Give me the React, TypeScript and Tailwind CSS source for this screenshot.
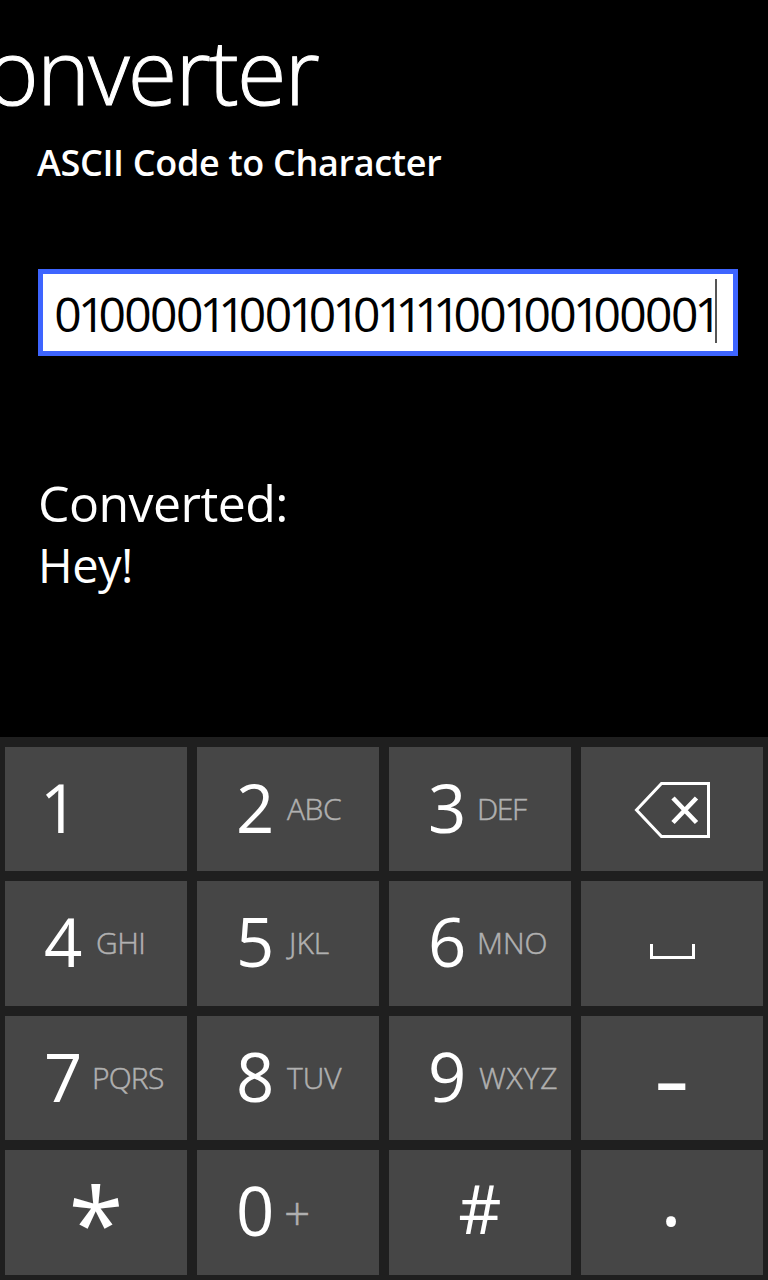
import React from "react";

type KeyDef = { digit: string; label?: string; digitClass?: string; labelClass?: string };

function DigitKey({
  digit,
  label,
  digitClass = "",
  labelClass = "ml-[4px] text-[30px]",
}: KeyDef) {
  return (
    <button className="flex h-full w-full items-start bg-[#464646] pl-[39px] text-left">
      <span className={`mt-[10px] w-[47px] shrink-0 text-[67px] leading-[100px] text-white ${digitClass}`}>{digit}</span>
      {label && (
        <span
          className={`pt-[11px] whitespace-nowrap font-light leading-[102px] text-[#b0b0b0] [-webkit-text-stroke:0.5px_#b0b0b0] ${labelClass}`}
        >
          {label}
        </span>
      )}
    </button>
  );
}

function IconKey({ label, children }: { label: string; children: React.ReactNode }) {
  return (
    <button aria-label={label} className="h-full w-full bg-[#464646]">
      <svg viewBox="0 0 182 124" className="h-[124px] w-[182px]" fill="none" stroke="white">
        {children}
      </svg>
    </button>
  );
}

const code = "01000011001010111100100100001";

// Tightens each pair of digits so that ones take less room than zeros.
const pairTracking: Record<string, string> = {
  "00": "tracking-[-1.65px]",
  "01": "tracking-[-3.8px]",
  "10": "tracking-[-6.9px]",
  "11": "tracking-[-8.7px]",
  "1": "tracking-[-7px]",
};

export default function App() {
  return (
    <div className="flex h-[1280px] w-[768px] flex-col overflow-hidden bg-black font-['Open_Sans','Noto_Sans',sans-serif] text-white">
      <main className="flex h-[737px] flex-col">
        <h1 className="mt-[20px] -ml-[14px] h-[100px] whitespace-nowrap text-[90px] font-light leading-[100px] tracking-[-1.8px] [-webkit-text-stroke:1px_white]">
          onverter
        </h1>
        <h2 className="mt-[18px] ml-[37px] h-[50px] whitespace-nowrap text-[36px] font-semibold leading-[50px] tracking-[-0.33px]">
          ASCII Code to Character
        </h2>
        <div className="mt-[81px] ml-[38px] flex h-[87px] w-[700px] items-start justify-end border-[5px] border-[#3e65ff] bg-white pr-[16px] pt-[5px] text-black">
          <div className="h-[64px] whitespace-nowrap text-[48px] leading-[70px]">
            {code.split("").map((d, i) => (
              <span key={i} className={pairTracking[code.slice(i, i + 2)]}>
                {d}
              </span>
            ))}
          </div>
          <div className="h-[64px] w-[2px] shrink-0 bg-[#555555]" />
        </div>
        <p className="mt-[112px] ml-[38px] h-[70px] whitespace-nowrap text-[50px] leading-[70px] tracking-[-0.55px]">Converted:</p>
        <p className="-mt-[8px] ml-[38px] h-[70px] whitespace-nowrap text-[47px] leading-[70px] tracking-[-0.5px]">Hey!</p>
      </main>
      <section className="grid h-[543px] grid-cols-[repeat(4,182px)] grid-rows-[124px_125px_124px_125px] gap-[10px] bg-[#1f1f1f] px-[5px] pt-[10px]">
        <DigitKey digit="1" digitClass="-ml-[4px]" />
        <DigitKey digit="2" label="ABC" labelClass="ml-[4px] text-[30px] tracking-[-0.4px]" />
        <DigitKey digit="3" label="DEF" labelClass="ml-[2px] text-[30px] tracking-[-1.4px]" />
        <IconKey label="Backspace">
          <path d="M127.5 36.5V89.5H80.5L55.5 63L80.5 36.5Z" strokeWidth="3" />
          <path d="M92 51L115.500 75.500M115.500 51L92 75.500" strokeWidth="4.600" />
        </IconKey>
        <DigitKey digit="4" label="GHI" labelClass="ml-[5px] text-[30px] tracking-[-0.5px]" />
        <DigitKey digit="5" label="JKL" labelClass="ml-[6px] text-[30px]" />
        <DigitKey digit="6" label="MNO" labelClass="ml-[2px] text-[30px]" />
        <IconKey label="Space">
          <path d="M70.500 62V75.500H112.500V62" strokeWidth="3" />
        </IconKey>
        <DigitKey digit="7" label="PQRS" labelClass="ml-[1px] text-[30px] tracking-[-0.8px]" />
        <DigitKey digit="8" label="TUV" labelClass="ml-[4px] text-[30px]" />
        <DigitKey digit="9" label="WXYZ" labelClass="ml-[4px] text-[30px] tracking-[0.8px]" />
        <button className="flex h-full w-full items-start justify-center bg-[#464646]">
          <span className="mt-[13px] scale-x-[1.6] text-[67px] font-semibold leading-[100px]">-</span>
        </button>
        <button className="flex h-full w-full items-start justify-center bg-[#464646]">
          <span className="mt-[22px] text-[100px] leading-[100px]">*</span>
        </button>
        <DigitKey digit="0" label="+" labelClass="ml-[1px] text-[46px]" />
        <button className="flex h-full w-full items-start justify-center bg-[#464646]">
          <span className="mt-[8px] text-[67px] leading-[100px]">#</span>
        </button>
        <button className="flex h-full w-full items-start justify-center bg-[#464646]">
          <span className="-ml-[2px] text-[84px] leading-[88px]">.</span>
        </button>
      </section>
    </div>
  );
}
